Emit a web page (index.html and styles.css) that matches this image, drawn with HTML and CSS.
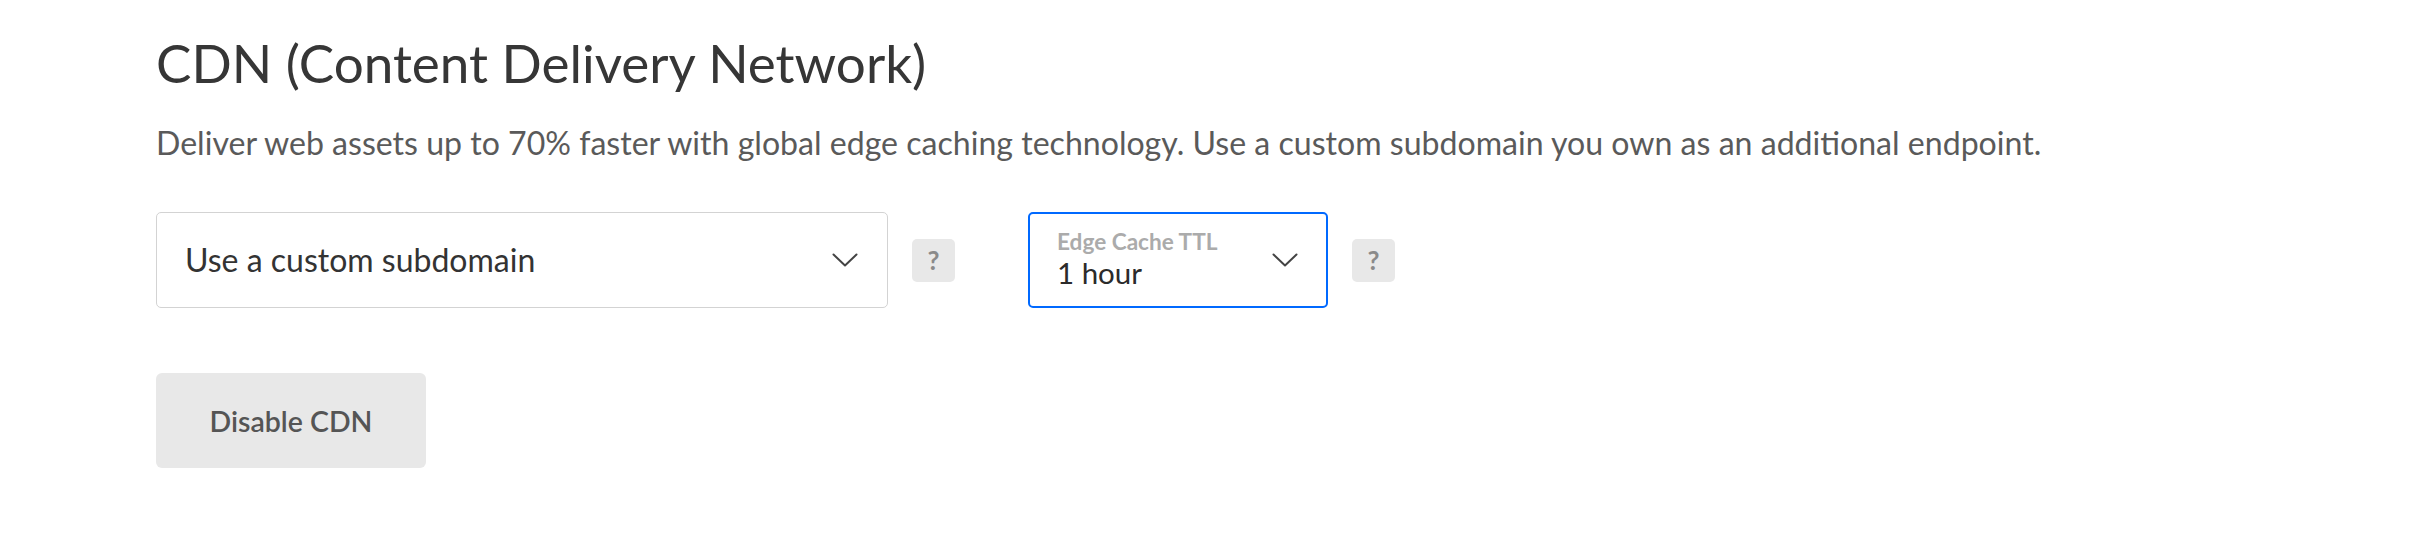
FILE: index.html
```html
<!DOCTYPE html>
<html>
<head>
<meta charset="utf-8">
<link rel="stylesheet" href="styles.css">
</head>
<body>
<section class="cdn">
  <h2 class="cdn-title">CDN (Content Delivery Network)</h2>
  <p class="cdn-desc">Deliver web assets up to 70% faster with global edge caching technology. Use a custom subdomain you own as an additional endpoint.</p>
  <div class="cdn-row">
    <div class="select select-domain">
      <span class="select-value">Use a custom subdomain</span>
      <svg class="chevron" width="26" height="14" viewBox="0 0 26 14"><polyline points="1.5,1.5 13,12.5 24.5,1.5" fill="none" stroke="#444" stroke-width="2" stroke-linecap="round" stroke-linejoin="round"/></svg>
    </div>
    <span class="help">?</span>
    <div class="select select-ttl">
      <div class="select-stack">
        <span class="select-label">Edge Cache TTL</span>
        <span class="select-value">1 hour</span>
      </div>
      <svg class="chevron" width="26" height="14" viewBox="0 0 26 14"><polyline points="1.5,1.5 13,12.5 24.5,1.5" fill="none" stroke="#444" stroke-width="2" stroke-linecap="round" stroke-linejoin="round"/></svg>
    </div>
    <span class="help">?</span>
  </div>
  <button class="btn-disable">Disable CDN</button>
</section>
</body>
</html>
```
FILE: styles.css
```css
html, body {
  margin: 0;
  padding: 0;
  background: #fff;
}
body {
  font-family: "Lato", "Open Sans", sans-serif;
  color: #333;
}
.cdn {
  padding: 31px 0 0 156px;
  display: flex;
  flex-direction: column;
  align-items: flex-start;
}
.cdn-title {
  margin: 0;
  font-size: 53px;
  line-height: 64px;
  font-weight: 400;
  color: #363636;
}
.cdn-desc {
  margin: 28px 0 0;
  font-size: 32.1px;
  line-height: 40px;
  color: #5a5a5a;
}
.cdn-row {
  margin-top: 49px;
  display: flex;
  align-items: center;
}
.select {
  box-sizing: border-box;
  height: 96px;
  display: flex;
  align-items: center;
  justify-content: space-between;
  background: #fff;
  border-radius: 5px;
}
.select-domain {
  width: 732px;
  border: 1.5px solid #d3d3d3;
  padding: 0 29px 0 28px;
}
.select-ttl {
  width: 300px;
  border: 2px solid #0069ff;
  padding: 0 28px 0 27px;
  margin-left: 73px;
}
.select-stack {
  display: flex;
  flex-direction: column;
}
.select-value {
  font-size: 32px;
  line-height: 36px;
  color: #333;
}
.select-ttl .select-value {
  font-size: 29.5px;
  line-height: 34px;
  color: #2b2b2b;
}
.select-label {
  font-size: 22.6px;
  line-height: 25px;
  font-weight: 700;
  color: #ababab;
  margin-top: -2px;
  margin-bottom: 2px;
}
.chevron {
  flex: none;
}
.help {
  margin-left: 24px;
  width: 43px;
  height: 43px;
  border-radius: 5px;
  background: #e8e8e8;
  color: #8a8a8a;
  font-size: 26px;
  font-weight: 700;
  display: flex;
  align-items: center;
  justify-content: center;
}
.btn-disable {
  margin-top: 65px;
  width: 270px;
  height: 95px;
  border: none;
  border-radius: 6px;
  background: #e8e8e8;
  color: #555;
  font-family: "Lato", "Open Sans", sans-serif;
  font-size: 28.5px;
  font-weight: 600;
  padding: 0;
}
```
